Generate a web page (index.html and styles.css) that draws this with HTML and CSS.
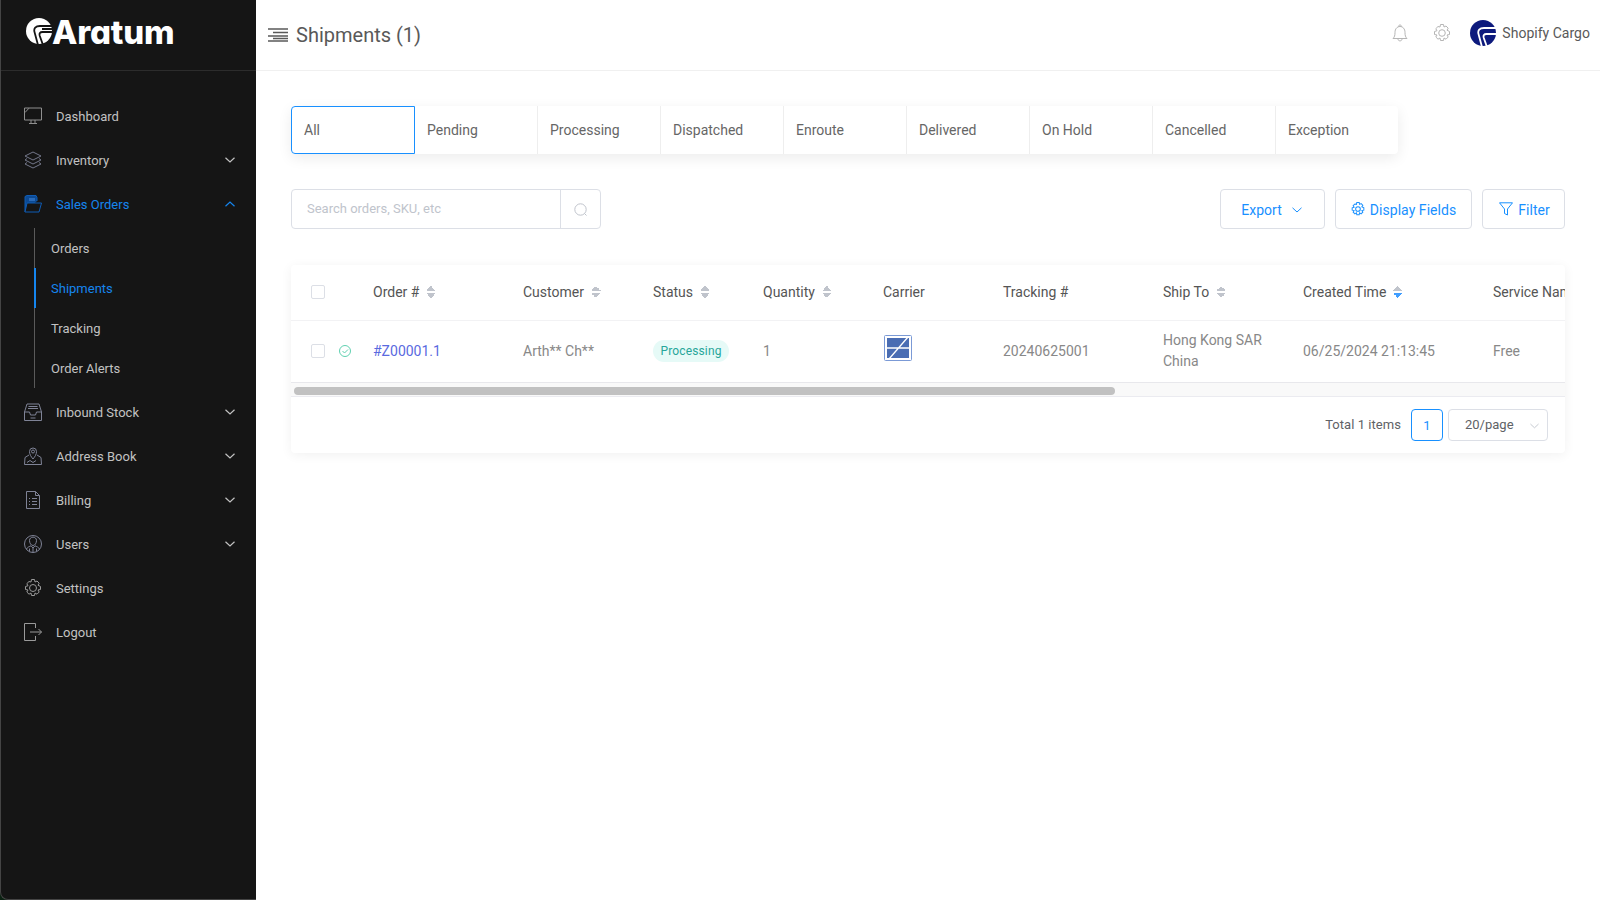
FILE: index.html
```html
<!DOCTYPE html>
<html lang="en">
<head>
  <meta charset="UTF-8">
  <title>Shipments (1)</title>
  <link rel="stylesheet" href="styles.css">
</head>
<body>

  <aside class="sidebar">
    <div class="brand">
      <svg class="brand-mark" viewBox="0 0 26 26"><circle cx="13" cy="13" r="13" fill="#fff"/><path d="M27 8H14C9.500 8 7.500 10.500 8.500 14L12 27M27 14H16.500C14 14 13 15.500 13.800 18L17 27M27 11H16" fill="none" stroke="#151515" stroke-width="1.800"/></svg>
      <span class="brand-name">Aratum</span>
    </div>

    <nav class="nav">
      <a class="nav-item">
        <svg class="nav-icon" viewBox="0 0 18 18"><path d="M.5 1h17v12H.5zM7 13v3M11 13v3M5 16.500h8M1 5.500 5 1.200" fill="none" stroke="#8f8f8f"/></svg>
        <span>Dashboard</span>
      </a>
      <a class="nav-item">
        <svg class="nav-icon" viewBox="0 0 18 18"><path d="M9 1 17 5 9 9 1 5zM3 7.500 1 9l8 4 8-4-2-1.500M3 11.500 1 13l8 4 8-4-2-1.500" fill="none" stroke="#737789"/></svg>
        <span>Inventory</span>
        <svg class="nav-arrow" viewBox="0 0 10 6"><path d="M.5.800 5 5 9.500.800" fill="none" stroke="currentColor" stroke-width="1.200"/></svg>
      </a>
      <a class="nav-item active">
        <svg class="nav-icon" viewBox="0 0 18 18"><path d="M1 17V1.500L3 .5h9l1 2v3.500" fill="#0c4a94" stroke="#0f5cb5"/><path d="M1 17l2-9h14.500L15 17z" fill="#151515" stroke="#0f5cb5"/><path d="M5 3h6v3H5z" fill="#2a6ab8"/></svg>
        <span>Sales Orders</span>
        <svg class="nav-arrow" viewBox="0 0 10 6"><path d="M.5 5.200 5 1l4.500 4.200" fill="none" stroke="currentColor" stroke-width="1.200"/></svg>
      </a>
      <div class="subnav">
        <a class="subnav-item">Orders</a>
        <a class="subnav-item active">Shipments</a>
        <a class="subnav-item">Tracking</a>
        <a class="subnav-item">Order Alerts</a>
      </div>
      <a class="nav-item">
        <svg class="nav-icon" viewBox="0 0 18 18"><path d="M.5 9v8.500h17V9l-2.500-8H3zM.5 9h5l1 3h5l1-3h5M4.500 3.500h9M4 5.500h10M6.500 15h5" fill="none" stroke="#7f8396"/></svg>
        <span>Inbound Stock</span>
        <svg class="nav-arrow" viewBox="0 0 10 6"><path d="M.5.800 5 5 9.500.800" fill="none" stroke="currentColor" stroke-width="1.200"/></svg>
      </a>
      <a class="nav-item">
        <svg class="nav-icon" viewBox="0 0 18 18"><path d="M9 12C7 9.500 5.500 7.500 5.500 4.500a3.500 3.500 0 0 1 7 0c0 3-1.500 5-3.500 7.500zM5 8l-4 2.500-.5 7h17l-.5-7-4-2.500M3 15.500l3-2 3 2 3-2" fill="none" stroke="#7f8396"/><circle cx="9" cy="4.500" r="1.500" fill="none" stroke="#7f8396"/></svg>
        <span>Address Book</span>
        <svg class="nav-arrow" viewBox="0 0 10 6"><path d="M.5.800 5 5 9.500.800" fill="none" stroke="currentColor" stroke-width="1.200"/></svg>
      </a>
      <a class="nav-item">
        <svg class="nav-icon" viewBox="0 0 18 18"><path d="M2.500.500h9l4 4v13h-13zM11.500.500v4h4M5 7.500h1M8 7.500h5M5 10.500h1M8 10.500h5M5 13.500h1M8 13.500h5" fill="none" stroke="#7f8396"/></svg>
        <span>Billing</span>
        <svg class="nav-arrow" viewBox="0 0 10 6"><path d="M.5.800 5 5 9.500.800" fill="none" stroke="currentColor" stroke-width="1.200"/></svg>
      </a>
      <a class="nav-item">
        <svg class="nav-icon" viewBox="0 0 18 18"><circle cx="9" cy="9" r="8.500" fill="none" stroke="#7f8396"/><path d="M5.500 5.500c0-4.500 7-4.500 7 0 0 2.500-1.500 5-3.500 5s-3.500-2.500-3.500-5zM2.500 14c1-2 3-2.500 4.500-3.200l2 2.200 2-2.200c1.500.7 3.500 1.200 4.500 3.200M9 13v4.500M5.500 13.500v3M12.500 13.500v3" fill="none" stroke="#7f8396"/></svg>
        <span>Users</span>
        <svg class="nav-arrow" viewBox="0 0 10 6"><path d="M.5.800 5 5 9.500.800" fill="none" stroke="currentColor" stroke-width="1.200"/></svg>
      </a>
      <a class="nav-item">
        <svg class="nav-icon" viewBox="0 0 18 18"><path d="M7.500.500h3l.5 2.500 2-1 2.200 2.200-1.200 2L16.500 7.500v3l-2.500.5 1.200 2-2.200 2.200-2-1.200-.5 2.500h-3l-.5-2.500-2 1.200-2.200-2.200 1.200-2-2.500-.5v-3L4 6.700l-1.200-2L5 2.500l2 .5z" fill="none" stroke="#9a9a9a"/><circle cx="9" cy="9" r="3.500" fill="none" stroke="#9a9a9a"/></svg>
        <span>Settings</span>
      </a>
      <a class="nav-item">
        <svg class="nav-icon" viewBox="0 0 18 18"><path d="M11.500 5V.5H.5v17h11V13M6 9h11.500M14.500 6l3 3-3 3" fill="none" stroke="#9a9a9a"/></svg>
        <span>Logout</span>
      </a>
    </nav>
  </aside>

  <div class="main">
    <header class="topbar">
      <svg class="menu-icon" viewBox="0 0 20 14"><path d="M0 1h20M5 4.500h15M0 8h20M5 10.500h15M0 13h20" stroke="#595959" stroke-width="1.300"/></svg>
      <h1 class="page-title">Shipments (1)</h1>
      <div class="topbar-right">
        <svg class="top-icon" viewBox="0 0 16 18"><path d="M1 14.500c1.500-1.500 2-3 2-6 0-3.500 2-6 5-6s5 2.500 5 6c0 3 .5 4.500 2 6zM6.500 2.500c0-2 3-2 3 0M6 15c0 2.500 4 2.500 4 0" fill="none" stroke="#b5b5b5"/></svg>
        <svg class="top-icon gear" viewBox="0 0 18 18"><path d="M7.500.500h3l.5 2.500 2-1 2.200 2.200-1.200 2L16.500 7.500v3l-2.500.5 1.200 2-2.200 2.200-2-1.200-.5 2.500h-3l-.5-2.500-2 1.200-2.200-2.200 1.200-2-2.500-.5v-3L4 6.700l-1.200-2L5 2.500l2 .5z" fill="none" stroke="#b5b5b5"/><circle cx="9" cy="9" r="3.300" fill="none" stroke="#b5b5b5"/></svg>
        <svg class="avatar" viewBox="0 0 26 26"><circle cx="13" cy="13" r="13" fill="#0d1a7d"/><path d="M27 8H14C9.500 8 7.500 10.500 8.500 14L12 27M27 14H16.500C14 14 13 15.500 13.800 18L17 27" fill="none" stroke="#fff" stroke-width="1.800"/></svg>
        <span class="user-name">Shopify Cargo</span>
      </div>
    </header>

    <main class="content">
      <div class="tabs">
        <div class="tab active">All</div>
        <div class="tab">Pending</div>
        <div class="tab">Processing</div>
        <div class="tab">Dispatched</div>
        <div class="tab">Enroute</div>
        <div class="tab">Delivered</div>
        <div class="tab">On Hold</div>
        <div class="tab">Cancelled</div>
        <div class="tab">Exception</div>
      </div>

      <div class="toolbar">
        <div class="search">
          <input class="search-input" type="text" placeholder="Search orders, SKU, etc">
          <div class="search-btn">
            <svg viewBox="0 0 14 14"><circle cx="6.500" cy="6.500" r="5.700" fill="none" stroke="#c0c4cc"/><path d="M10.500 10.500l2 2" stroke="#c0c4cc"/></svg>
          </div>
        </div>
        <div class="actions">
          <button class="btn btn-export">Export
            <svg class="btn-caret" viewBox="0 0 10 6"><path d="M.5.800 5 5 9.500.800" fill="none" stroke="currentColor"/></svg>
          </button>
          <button class="btn btn-fields">
            <svg class="btn-icon" viewBox="0 0 18 18"><path d="M7.500.500h3l.5 2.500 2-1 2.200 2.200-1.200 2L16.500 7.500v3l-2.500.5 1.200 2-2.200 2.200-2-1.200-.5 2.500h-3l-.5-2.500-2 1.200-2.200-2.200 1.200-2-2.500-.5v-3L4 6.700l-1.200-2L5 2.500l2 .5z" fill="none" stroke="currentColor" stroke-width="1.300"/><circle cx="9" cy="9" r="3" fill="none" stroke="currentColor" stroke-width="1.300"/></svg>
            Display Fields
          </button>
          <button class="btn btn-filter">
            <svg class="btn-icon" viewBox="0 0 14 14"><path d="M.5.800h13L8.500 7v6L5.500 11.500V7z" fill="none" stroke="currentColor"/></svg>
            Filter
          </button>
        </div>
      </div>

      <div class="card">
        <div class="table-wrap">
          <table class="table">
            <colgroup>
              <col class="col-select"><col class="col-order"><col class="col-customer"><col class="col-status"><col class="col-qty"><col class="col-carrier"><col class="col-tracking"><col class="col-ship"><col class="col-created"><col class="col-service">
            </colgroup>
            <thead>
              <tr>
                <th class="cell-select"><span class="checkbox"></span></th>
                <th>Order # <span class="sort"></span></th>
                <th>Customer <span class="sort"></span></th>
                <th>Status <span class="sort"></span></th>
                <th>Quantity <span class="sort"></span></th>
                <th>Carrier</th>
                <th>Tracking #</th>
                <th>Ship To <span class="sort"></span></th>
                <th>Created Time <span class="sort desc"></span></th>
                <th>Service Name</th>
              </tr>
            </thead>
            <tbody>
              <tr>
                <td class="cell-select">
                  <span class="checkbox"></span>
                  <svg class="row-check" viewBox="0 0 12 12"><circle cx="6" cy="6" r="5.500" fill="none" stroke="#5fd0b0"/><path d="M3.500 6l2 2 3.500-3.500" fill="none" stroke="#5fd0b0"/></svg>
                </td>
                <td><a class="order-link">#Z00001.1</a></td>
                <td>Arth** Ch**</td>
                <td><span class="pill">Processing</span></td>
                <td>1</td>
                <td>
                  <svg class="carrier" viewBox="0 0 28 26"><rect width="28" height="26" rx="1" fill="#fff"/><rect x=".5" y=".5" width="27" height="25" rx="1" fill="none" stroke="#7b9ad6"/><rect x="3" y="3" width="22" height="20" fill="#4a6db3"/><path d="M3 13h22M5 24 24 2" stroke="#fff" stroke-width="1.300"/></svg>
                </td>
                <td>20240625001</td>
                <td>Hong Kong SAR<br>China</td>
                <td>06/25/2024 21:13:45</td>
                <td>Free</td>
              </tr>
            </tbody>
          </table>
        </div>
        <div class="scrollbar"><div class="scroll-thumb"></div></div>
        <div class="pager">
          <span class="pager-total">Total 1 items</span>
          <span class="pager-num">1</span>
          <div class="pager-size">
            <span>20/page</span>
            <svg class="pager-caret" viewBox="0 0 10 6"><path d="M.5.800 5 5 9.500.800" fill="none" stroke="#c0c4cc"/></svg>
          </div>
        </div>
      </div>
    </main>
  </div>

</body>
</html>
```

FILE: styles.css
```css
* {
  box-sizing: border-box;
}

body {
  margin: 0;
  height: 900px;
  overflow: hidden;
  display: flex;
  font-family: Roboto, "Liberation Sans", sans-serif;
  font-size: 14px;
  color: #888;
  background-color: #0b2212;
}

/* sidebar */

.sidebar {
  width: 256px;
  flex-shrink: 0;
  background-color: #151515;
  border-left: 1px solid #444;
  border-bottom: 1px solid #444;
  border-bottom-left-radius: 8px;
}

.brand {
  height: 71px;
  padding: 18px 0 0 25px;
  display: flex;
  align-items: flex-start;
  border-bottom: 1px solid #2c2c2c;
}

.brand-mark {
  width: 26px;
  height: 26px;
  flex-shrink: 0;
}

.brand-name {
  font-family: Inter, sans-serif;
  font-feature-settings: "cv11";
  font-weight: 800;
  font-size: 33px;
  line-height: 28px;
  letter-spacing: -0.2px;
  color: #fff;
}

.nav {
  display: flex;
  flex-direction: column;
  gap: 4px;
  padding-top: 25px;
}

.nav-item {
  height: 40px;
  display: flex;
  align-items: center;
  padding: 0 21px 0 23px;
  font-size: 13px;
  color: #c2c2c2;
}

.nav-item.active {
  color: #1585ee;
}

.nav-icon {
  width: 18px;
  height: 18px;
  flex-shrink: 0;
  margin-right: 14px;
}

.nav-arrow {
  width: 10px;
  height: 6px;
  margin-left: auto;
}

.subnav {
  margin-left: 33px;
  border-left: 1px solid #5a5a5a;
}

.subnav-item {
  display: flex;
  align-items: center;
  height: 40px;
  padding-left: 16px;
  font-size: 13px;
  color: #c2c2c2;
}

.subnav-item.active {
  color: #1585ee;
  border-left: 2px solid #1585ee;
  margin-left: -1px;
  padding-left: 15px;
}

/* top bar */

.main {
  flex: 1;
  min-width: 0;
  background-color: #fff;
}

.topbar {
  height: 71px;
  display: flex;
  align-items: center;
  padding: 0 10px 0 12px;
  border-bottom: 1px solid #f0f0f0;
}

.menu-icon {
  width: 20px;
  height: 14px;
  margin-right: 8px;
}

.page-title {
  margin: 0;
  font-size: 20px;
  font-weight: 400;
  color: #595959;
}

.topbar-right {
  margin-left: auto;
  margin-bottom: 4px;
  display: flex;
  align-items: center;
}

.top-icon {
  width: 16px;
  height: 18px;
  margin-right: 25px;
}

.top-icon.gear {
  width: 18px;
  margin-right: 19px;
}

.avatar {
  width: 26px;
  height: 26px;
  margin-right: 6px;
}

.user-name {
  font-size: 14px;
  letter-spacing: 0.02px;
  color: #595959;
}

/* tabs */

.content {
  padding: 35px 35px 0;
}

.tabs {
  display: flex;
  width: 1107px;
  height: 48px;
  border-radius: 4px;
  background-color: #fff;
  box-shadow: 0 4px 14px rgba(0, 0, 0, 0.08);
}

.tab {
  width: 123px;
  padding-left: 12px;
  line-height: 48px;
  color: #666;
  border-left: 1px solid #eee;
}

.tab.active {
  width: 124px;
  line-height: 46px;
  padding-left: 12px;
  border: 1px solid #1890ff;
  border-radius: 4px 0 0 4px;
}

.tab.active + .tab {
  width: 122px;
  border-left: 0;
}

/* toolbar */

.toolbar {
  display: flex;
  justify-content: space-between;
  margin-top: 35px;
}

.search {
  display: flex;
  width: 310px;
  height: 40px;
  border: 1px solid #dcdfe6;
  border-radius: 4px;
}

.search-input {
  flex: 1;
  min-width: 0;
  border: 0;
  outline: 0;
  padding: 0 15px 2px;
  background: transparent;
  font-family: inherit;
  font-size: 13px;
}

.search-input::placeholder {
  color: #c0c4cc;
}

.search-btn {
  width: 40px;
  display: flex;
  align-items: center;
  justify-content: center;
  border-left: 1px solid #dcdfe6;
}

.search-btn svg {
  width: 14px;
  height: 14px;
  margin-top: 2px;
}

.actions {
  display: flex;
  gap: 10px;
}

.btn {
  height: 40px;
  padding: 2px 0 0;
  display: flex;
  align-items: center;
  justify-content: center;
  white-space: nowrap;
  background: #fff;
  border: 1px solid #dcdfe6;
  border-radius: 4px;
  font-family: inherit;
  font-size: 14px;
  letter-spacing: 0.05px;
  color: #1890ff;
}

.btn-export {
  width: 105px;
  padding-right: 2px;
}

.btn-fields {
  width: 137px;
}

.btn-filter {
  width: 83px;
  padding-left: 2px;
}

.btn-caret {
  width: 10px;
  height: 6px;
  margin-left: 10px;
}

.btn-icon {
  width: 14px;
  height: 14px;
  margin: -3px 5px 0 0;
}

/* table */

.card {
  margin-top: 36px;
  width: 1274px;
  height: 188px;
  border-radius: 4px;
  background-color: #fff;
  box-shadow: 0 2px 12px rgba(0, 0, 0, 0.06);
}

.table-wrap {
  overflow: hidden;
}

.table {
  width: 1320px;
  table-layout: fixed;
  border-collapse: collapse;
}

.col-select { width: 82px; }
.col-order { width: 150px; }
.col-customer { width: 130px; }
.col-status { width: 110px; }
.col-qty { width: 120px; }
.col-carrier { width: 120px; }
.col-tracking { width: 160px; }
.col-ship { width: 140px; }
.col-created { width: 190px; }
.col-service { width: 118px; }

th {
  height: 55px;
  padding: 0;
  text-align: left;
  font-weight: 400;
  white-space: nowrap;
  color: #555;
  border-bottom: 1px solid #f2f2f4;
}

td {
  height: 62px;
  padding: 0;
  line-height: 21px;
  color: #888;
  border-bottom: 1px solid #e8e8ec;
}

.cell-select {
  padding-left: 20px;
  white-space: nowrap;
}

.checkbox {
  display: inline-block;
  width: 14px;
  height: 14px;
  margin-bottom: 2px;
  vertical-align: middle;
  border: 1px solid #dcdfe6;
  border-radius: 2px;
}

.row-check {
  width: 12px;
  height: 12px;
  margin: 0 0 2px 11px;
  vertical-align: middle;
}

.sort {
  display: inline-block;
  width: 10px;
  height: 12px;
  margin-left: 3.5px;
  vertical-align: -1px;
  background:
    linear-gradient(to bottom right, transparent 50%, #c0c4cc 50%) left top / 5px 5px no-repeat,
    linear-gradient(to bottom left, transparent 50%, #c0c4cc 50%) right top / 5px 5px no-repeat,
    linear-gradient(to top right, transparent 50%, #c0c4cc 50%) left bottom / 5px 5px no-repeat,
    linear-gradient(to top left, transparent 50%, #c0c4cc 50%) right bottom / 5px 5px no-repeat;
}

.sort.desc {
  background:
    linear-gradient(to bottom right, transparent 50%, #c0c4cc 50%) left top / 5px 5px no-repeat,
    linear-gradient(to bottom left, transparent 50%, #c0c4cc 50%) right top / 5px 5px no-repeat,
    linear-gradient(to top right, transparent 50%, #409eff 50%) left bottom / 5px 5px no-repeat,
    linear-gradient(to top left, transparent 50%, #409eff 50%) right bottom / 5px 5px no-repeat;
}

.order-link {
  color: #5a6ae0;
}

.pill {
  display: inline-block;
  width: 76px;
  height: 22px;
  line-height: 22px;
  text-align: center;
  border-radius: 11px;
  font-size: 12px;
  letter-spacing: 0.15px;
  color: #26a69a;
  background-color: #e6faf7;
}

.carrier {
  display: block;
  width: 28px;
  height: 26px;
  margin: -6px 0 0 1px;
}

.scrollbar {
  height: 14px;
  padding: 4px 3px;
  background-color: #f9f9f9;
  border-bottom: 1px solid #ebebf0;
}

.scroll-thumb {
  width: 821px;
  height: 8px;
  border-radius: 4px;
  background-color: #c1c1c1;
}

.pager {
  display: flex;
  align-items: center;
  justify-content: flex-end;
  padding: 12px 17px 0 0;
}

.pager-total {
  font-size: 13px;
  letter-spacing: 0.05px;
  color: #606266;
  margin-right: 10px;
}

.pager-num {
  width: 32px;
  height: 32px;
  line-height: 32px;
  text-align: center;
  font-size: 13px;
  color: #1890ff;
  border: 1px solid #1890ff;
  border-radius: 4px;
  margin-right: 5px;
}

.pager-size {
  width: 100px;
  height: 32px;
  display: flex;
  align-items: center;
  padding: 0 8px 0 16px;
  font-size: 13px;
  color: #606266;
  border: 1px solid #dcdfe6;
  border-radius: 4px;
}

.pager-caret {
  width: 9px;
  height: 6px;
  margin-left: auto;
  margin-top: 2px;
}
```
